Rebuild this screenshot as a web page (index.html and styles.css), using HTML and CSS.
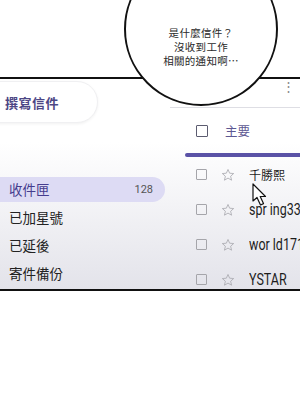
FILE: index.html
```html
<!DOCTYPE html>
<html lang="zh-Hant">
<head>
	<meta charset="UTF-8" />
	<meta name="viewport" content="width=device-width, initial-scale=1.0" />
	<title>是什麼信件？</title>
	<link rel="stylesheet" href="styles.css">
</head>
<body>
	<div class="page">
		<div class="sky"></div>

		<div class="panel">
			<div class="sidebar">
				<div class="compose">撰寫信件</div>
				<ul class="nav">
					<li class="nav-item active"><span>收件匣</span><span class="count">128</span></li>
					<li class="nav-item"><span>已加星號</span></li>
					<li class="nav-item"><span>已延後</span></li>
					<li class="nav-item"><span>寄件備份</span></li>
				</ul>
			</div>

			<div class="main">
				<div class="toolbar"><span class="dots">⋮</span></div>
				<div class="tab">
					<span class="box box-dark"></span>
					<span class="tab-label">主要</span>
				</div>
				<div class="tab-bar"></div>
				<div class="row">
					<span class="box"></span>
					<svg class="star" width="14" height="14" viewBox="0 0 24 24"><path d="M12 2.5l2.8 6.4 6.9.6-5.2 4.6 1.6 6.8L12 17.3 5.9 20.9l1.6-6.8L2.3 9.5l6.9-.6z"/></svg>
					<span class="from cjk">千勝熙</span>
				</div>
				<div class="row">
					<span class="box"></span>
					<svg class="star" width="14" height="14" viewBox="0 0 24 24"><path d="M12 2.5l2.8 6.4 6.9.6-5.2 4.6 1.6 6.8L12 17.3 5.9 20.9l1.6-6.8L2.3 9.5l6.9-.6z"/></svg>
					<span class="from">spr ing33</span>
				</div>
				<div class="row">
					<span class="box"></span>
					<svg class="star" width="14" height="14" viewBox="0 0 24 24"><path d="M12 2.5l2.8 6.4 6.9.6-5.2 4.6 1.6 6.8L12 17.3 5.9 20.9l1.6-6.8L2.3 9.5l6.9-.6z"/></svg>
					<span class="from">wor ld171</span>
				</div>
				<div class="row">
					<span class="box"></span>
					<svg class="star" width="14" height="14" viewBox="0 0 24 24"><path d="M12 2.5l2.8 6.4 6.9.6-5.2 4.6 1.6 6.8L12 17.3 5.9 20.9l1.6-6.8L2.3 9.5l6.9-.6z"/></svg>
					<span class="from">YSTAR</span>
				</div>
			</div>
		</div>

		<div class="bubble">
			<p class="line">是什麼信件？</p>
			<p class="line">沒收到工作</p>
			<p class="line">相關的通知啊⋯</p>
		</div>

		<svg class="cursor" width="17" height="24" viewBox="0 0 17 24">
			<path d="M1 1 L1 18 L5 14.5 L8.5 22 L11.5 20.6 L8.2 13.5 L13.5 13.5 Z" fill="#fff" stroke="#111" stroke-width="1.2" stroke-linejoin="round"/>
		</svg>
	</div>
</body>
</html>
```

FILE: styles.css
```css
html {
	background: #fff;
}

body {
	margin: 0;
	font-family: "Noto Sans CJK TC", "Noto Sans", sans-serif;
	color: #222;
}

.page {
	position: relative;
	width: 300px;
	height: 400px;
	overflow: hidden;
}

.sky {
	height: 77px;
}

.panel {
	display: flex;
	height: 210px;
	border-top: 2px solid #111;
	border-bottom: 2px solid #111;
	background: linear-gradient(#fff 30%, #e3e3ea);
	overflow: hidden;
}

/* sidebar */

.sidebar {
	width: 170px;
	flex: none;
}

.compose {
	width: 92px;
	height: 40px;
	margin: 2px 0 0 -12px;
	padding-left: 16px;
	display: flex;
	align-items: center;
	background: #fff;
	border: 1px solid #f0f0f2;
	border-radius: 0 22px 22px 0;
	box-shadow: 0 1px 3px rgba(0,0,0,0.06);
	font-size: 13px;
	font-weight: 700;
	letter-spacing: 0.5px;
	color: #4d4785;
}

.nav {
	list-style: none;
	margin: 54px 0 0;
	padding: 0;
	display: flex;
	flex-direction: column;
	gap: 3px;
}

.nav-item {
	height: 25px;
	width: 165px;
	box-sizing: border-box;
	padding: 0 12px 0 9px;
	display: flex;
	align-items: center;
	justify-content: space-between;
	font-size: 13.5px;
	line-height: 1;
	border-radius: 0 13px 13px 0;
}

.nav-item.active {
	background: #dddbf4;
	color: #453c8e;
}

.count {
	font-family: "Roboto", sans-serif;
	font-size: 11px;
	color: #555;
}

/* main list */

.main {
	flex: 1;
	min-width: 0;
}

.toolbar {
	height: 28px;
	border-bottom: 1px solid #dedee4;
	display: flex;
	justify-content: flex-end;
	align-items: flex-start;
}

.dots {
	margin: 1px 5px 0 0;
	font-size: 13px;
	line-height: 12px;
	color: #888;
}

.tab {
	height: 45px;
	padding-left: 26px;
	display: flex;
	align-items: center;
	gap: 17px;
}

.tab-label {
	font-size: 12.5px;
	color: #5d5892;
}

.tab-bar {
	height: 4px;
	margin-left: 15px;
	background: #5a52a6;
	border-radius: 2px 0 0 2px;
}

.row {
	height: 35px;
	padding-left: 26px;
	display: flex;
	align-items: center;
	white-space: nowrap;
}

.box {
	width: 9px;
	height: 9px;
	flex: none;
	border: 1.5px solid #a5a5aa;
	border-radius: 1px;
}

.box-dark {
	width: 10px;
	height: 10px;
	border-color: #5c5c70;
}

.star {
	flex: none;
	margin-left: 14px;
	fill: none;
	stroke: #a8a8ae;
	stroke-width: 1.4;
	stroke-linejoin: round;
}

.from {
	margin-left: 14px;
	font-family: "Roboto", sans-serif;
	font-size: 16px;
	color: #1c1c1c;
	transform: scaleX(0.78);
	transform-origin: left center;
}

.from.cjk {
	font-family: "Noto Sans CJK TC", sans-serif;
	font-size: 12px;
	transform: none;
}

/* speech bubble over the panel */

.bubble {
	position: absolute;
	left: 124px;
	top: -48px;
	width: 154px;
	height: 154px;
	padding-top: 72px;
	box-sizing: border-box;
	border: 2px solid #111;
	border-radius: 50%;
	background: #fff;
	text-align: center;
}

.line {
	margin: 0;
	height: 14px;
	font-size: 10.5px;
	letter-spacing: 0.3px;
	line-height: 14px;
	color: #2a2a2a;
}

.cursor {
	position: absolute;
	left: 252px;
	top: 183px;
}
```
